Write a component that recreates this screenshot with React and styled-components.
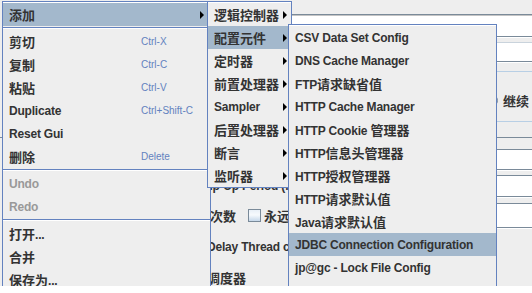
import React from "react";
import styled, { createGlobalStyle } from "styled-components";

const GlobalStyle = createGlobalStyle`
  html, body { margin: 0; padding: 0; background: #ffffff; }
`;

const Screen = styled.div`
  position: relative;
  width: 532px;
  height: 286px;
  overflow: hidden;
  background: #eeeeee;
  font-family: "Liberation Sans", "Noto Sans CJK SC", sans-serif;
  font-size: 12px;
  font-weight: bold;
  color: #333333;
`;

/* ---------- the JMeter panel behind the menus ---------- */

const Backdrop = styled.div`
  display: flex;
  flex-direction: column;
  padding-top: 14px;
`;

const FieldRow = styled.div`
  flex: none;
  display: flex;
  align-items: center;
  height: ${p => p.$h}px;
  margin-top: ${p => p.$mt || 0}px;
  padding-left: ${p => p.$indent || 0}px;
  white-space: nowrap;
`;

const Field = styled.div`
  flex: 1;
  align-self: stretch;
  box-sizing: border-box;
  margin-left: ${p => p.$gap || 0}px;
  background: #ffffff;
  border-top: 1px solid ${p => (p.$soft ? "#c9d3dc" : "#7a8a99")};
  border-bottom: 1px solid #7a8a99;
  box-shadow: ${p => (p.$double ? "inset 0 1px 0 #c4c4c4, " : "")}0 1px 0 #ffffff;
`;

const TitledPanel = styled.div`
  flex: none;
  display: flex;
  align-items: center;
  gap: 5px;
  height: 51px;
  box-sizing: border-box;
  margin: 9px 0 0 120px;
  padding: 8px 0 0 364px;
  border: 1px solid #b8cfe5;
  border-right: none;
`;

const GroupPanel = styled.div`
  flex: none;
  display: flex;
  flex-direction: column;
  margin-top: 15px;
  border-top: 1px solid #7a8a99;
`;

const Radio = styled.span`
  flex: none;
  width: 13px;
  height: 13px;
  box-sizing: border-box;
  border-radius: 50%;
  border: 1px solid #7a8a99;
  background: linear-gradient(#dde8f3, #ffffff);
`;

const Check = styled.span`
  flex: none;
  width: 13px;
  height: 13px;
  box-sizing: border-box;
  margin-left: ${p => p.$ml || 0}px;
  border: 1px solid #7a8a99;
  background: linear-gradient(to bottom, #e9f0f7, #f7fafd 45%, #c6d8ea);
`;

const Caption = styled.span`
  flex: none;
  margin-left: ${p => p.$ml || 0}px;
  letter-spacing: -0.2px;
`;

/* ---------- popup menus ---------- */

const Popup = styled.div`
  position: absolute;
  left: ${p => p.$x}px;
  top: ${p => p.$y}px;
  width: ${p => p.$w}px;
  box-sizing: border-box;
  display: flex;
  flex-direction: column;
  padding-top: 1px;
  background: #eeeeee;
  border: 1px solid #6382bf;
  box-shadow: inset 0 1px 0 #ffffff;
`;

const Item = styled.div`
  flex: none;
  display: flex;
  align-items: center;
  height: 23px;
  padding: 0 ${p => p.$pr ?? 6}px 0 6px;
  background: ${p => (p.$active ? "#a3b8cc" : "transparent")};
  color: ${p => (p.$disabled ? "#999999" : "#333333")};
  white-space: nowrap;
`;

const ItemText = styled.span`
  flex: none;
  width: ${p => (p.$w ? `${p.$w}px` : "auto")};
  letter-spacing: -0.2px;
`;

const Accel = styled.span`
  font-size: 10px;
  font-weight: normal;
  color: #6382bf;
`;

const Arrow = styled.span`
  margin-left: auto;
  width: 0;
  height: 0;
  border-left: 4px solid #000000;
  border-top: 4px solid transparent;
  border-bottom: 4px solid transparent;
`;

const Separator = styled.div`
  flex: none;
  height: 4px;
  background: linear-gradient(
    to bottom,
    transparent 1px,
    #6382bf 1px,
    #6382bf 2px,
    #ffffff 2px,
    #ffffff 3px,
    transparent 3px
  );
`;

const Han = styled.span`
  font-family: "Noto Sans CJK SC", sans-serif;
  font-size: 13px;
  letter-spacing: 0;
`;

const HAN = /([\u2e80-\u9fff\uff00-\uffef]+)/;

function Txt({ children }) {
  return children
    .split(HAN)
    .filter(Boolean)
    .map((part, i) => (HAN.test(part) ? <Han key={i}>{part}</Han> : <React.Fragment key={i}>{part}</React.Fragment>));
}

const mainItems = [
  { label: "添加", active: true, sub: true },
  "sep",
  { label: "剪切", accel: "Ctrl-X" },
  { label: "复制", accel: "Ctrl-C" },
  { label: "粘贴", accel: "Ctrl-V" },
  { label: "Duplicate", accel: "Ctrl+Shift-C" },
  { label: "Reset Gui" },
  { label: "删除", accel: "Delete" },
  "sep",
  { label: "Undo", disabled: true },
  { label: "Redo", disabled: true },
  "sep",
  { label: "打开..." },
  { label: "合并" },
  { label: "保存为..." },
];

const addItems = ["逻辑控制器", "配置元件", "定时器", "前置处理器", "Sampler", "后置处理器", "断言", "监听器"];

const configItems = [
  "CSV Data Set Config",
  "DNS Cache Manager",
  "FTP请求缺省值",
  "HTTP Cache Manager",
  "HTTP Cookie 管理器",
  "HTTP信息头管理器",
  "HTTP授权管理器",
  "HTTP请求默认值",
  "Java请求默认值",
  "JDBC Connection Configuration",
  "jp@gc - Lock File Config",
  "jp@gc - Variables From CSV File",
];

export default function App() {
  return (
    <>
      <GlobalStyle />
      <Screen>
        <Backdrop>
          <FieldRow $h={23} $indent={100}>
            <Field $double />
          </FieldRow>
          <FieldRow $h={20} $mt={5} $indent={100}>
            <Field $soft />
          </FieldRow>
          <TitledPanel>
            <Radio />
            <Txt>继续</Txt>
          </TitledPanel>
          <GroupPanel>
            <FieldRow $h={21} $mt={11} $indent={184}>
              <Caption><Txt>线程数：</Txt></Caption>
              <Field $gap={8} />
            </FieldRow>
            <FieldRow $h={22} $mt={5} $indent={187}>
              <Caption>Ramp-Up Period (in seconds):</Caption>
              <Field $gap={8} />
            </FieldRow>
            <FieldRow $h={25} $mt={6} $indent={184}>
              <Caption><Txt>循环次数</Txt></Caption>
              <Check $ml={12} />
              <Caption $ml={3}><Txt>永远</Txt></Caption>
              <Field $gap={8} />
            </FieldRow>
            <FieldRow $h={25} $mt={6} $indent={190}>
              <Check />
              <Caption $ml={4}>Delay Thread creation until needed</Caption>
            </FieldRow>
            <FieldRow $h={25} $mt={6} $indent={190}>
              <Check />
              <Caption $ml={4}><Txt>调度器</Txt></Caption>
            </FieldRow>
          </GroupPanel>
        </Backdrop>

        <Popup $x={2} $y={1} $w={209}>
          {mainItems.map((it, i) =>
            it === "sep" ? (
              <Separator key={i} />
            ) : (
              <Item key={i} $active={it.active} $disabled={it.disabled}>
                <ItemText $w={it.accel ? 132 : 0}><Txt>{it.label}</Txt></ItemText>
                {it.accel && <Accel>{it.accel}</Accel>}
                {it.sub && <Arrow />}
              </Item>
            )
          )}
        </Popup>

        <Popup $x={207} $y={1} $w={85}>
          {addItems.map((label, i) => (
            <Item key={label} $active={i === 1} $pr={4}>
              <ItemText><Txt>{label}</Txt></ItemText>
              <Arrow />
            </Item>
          ))}
        </Popup>

        <Popup $x={288} $y={24} $w={209}>
          {configItems.map((label, i) => (
            <Item key={label} $active={i === 9}>
              <ItemText><Txt>{label}</Txt></ItemText>
            </Item>
          ))}
        </Popup>
      </Screen>
    </>
  );
}
